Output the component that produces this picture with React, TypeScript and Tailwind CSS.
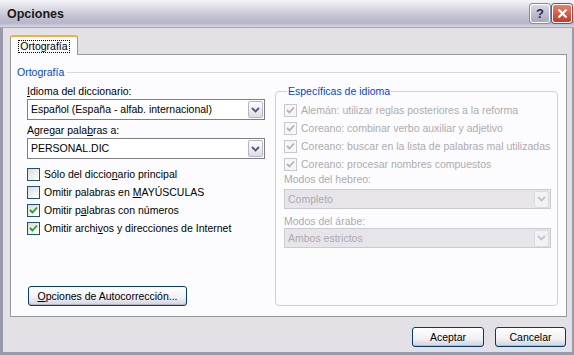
import React from "react";

const Check = ({ disabled }: { disabled?: boolean }) => (
  <svg width="9" height="9" viewBox="0 0 9 9">
    <path d="M1 4 L3.5 6.5 L8 1.5" fill="none" stroke={disabled ? "#b4b2b8" : "#21a121"} strokeWidth="1.8" />
  </svg>
);

const Box = ({ checked, disabled }: { checked?: boolean; disabled?: boolean }) => (
  <span
    className={
      "w-[13px] h-[13px] flex items-center justify-center shrink-0 border " +
      (disabled
        ? "border-[#c8c6ce] bg-[#f6f5f7]"
        : "border-[#1c5180] bg-[linear-gradient(135deg,#dcdcd7,#ffffff)]")
    }
  >
    {checked && <Check disabled={disabled} />}
  </span>
);

const CheckRow = ({
  checked,
  disabled,
  children,
}: {
  checked?: boolean;
  disabled?: boolean;
  children: React.ReactNode;
}) => (
  <div className={"h-[18px] flex items-center gap-[4px] " + (disabled ? "text-[#aeaab0]" : "")}>
    <Box checked={checked} disabled={disabled} />
    <span>{children}</span>
  </div>
);

const Chevron = ({ disabled }: { disabled?: boolean }) => (
  <span
    className={
      "w-[15px] h-[17px] shrink-0 flex items-center justify-center rounded-[2px] border " +
      (disabled
        ? "border-[#dcdae0] bg-[#f2f1f4]"
        : "border-[#b6b5c6] bg-[linear-gradient(to_bottom,#ffffff,#dcdce6)]")
    }
  >
    <svg width="9" height="6" viewBox="0 0 9 6">
      <path d="M1 1 L4.5 4.5 L8 1" fill="none" stroke={disabled ? "#c4c2ca" : "#4d5b78"} strokeWidth="1.8" />
    </svg>
  </span>
);

const Select = ({ value, disabled, h }: { value: string; disabled?: boolean; h: string }) => (
  <div
    className={
      "flex items-center border pl-[3px] pr-[1px] " +
      h +
      " " +
      (disabled ? "border-[#cbc9d1] bg-[#e7e5ea] text-[#aeaab0]" : "border-[#7f7f87] bg-white")
    }
  >
    <span className="flex-1 whitespace-nowrap">{value}</span>
    <Chevron disabled={disabled} />
  </div>
);

const Btn = ({ children, w }: { children: React.ReactNode; w: string }) => (
  <div
    className={
      "h-[20px] flex items-center justify-center rounded-[3px] border border-[#003c74] bg-[linear-gradient(to_bottom,#ffffff,#f0f0f4_60%,#d2d2de)] shadow-[inset_0_-1px_0_#b8b8cc] " +
      w
    }
  >
    {children}
  </div>
);

export default function App() {
  return (
    <div className="w-[574px] h-[355px] flex flex-col bg-[#e3e1e6] text-[10.5px] leading-[13px] text-black font-['Liberation_Sans',Arial,sans-serif] overflow-hidden">
      {/* Title bar */}
      <div className="h-[28px] shrink-0 flex items-center pl-[7px] pr-[2px] bg-[linear-gradient(to_bottom,#f4f4f8,#e4e4ec_20%,#c4c3d4_60%,#b6b5ca_85%,#d8d7e2)] border-b border-[#a8a7b8]">
        <span className="flex-1 font-bold text-[12.5px] text-[#1a1a1a] pt-[2px]">Opciones</span>
        <div className="flex gap-[2px]">
          <div className="w-[20px] h-[19px] rounded-[3px] border border-white bg-[linear-gradient(to_bottom,#d8d8e6,#a7a6bd)] flex items-center justify-center text-[#2a2a40] font-bold text-[13px] shadow-[0_0_0_1px_#8a89a0]">
            ?
          </div>
          <div className="w-[20px] h-[19px] rounded-[3px] border border-white bg-[linear-gradient(to_bottom,#e8806c,#c63a22)] flex items-center justify-center shadow-[0_0_0_1px_#9a4a40]">
            <svg width="11" height="11" viewBox="0 0 11 11">
              <path d="M1.5 1.5 L9.5 9.5 M9.5 1.5 L1.5 9.5" stroke="#ffffff" strokeWidth="2.2" />
            </svg>
          </div>
        </div>
      </div>

      {/* Body */}
      <div className="flex-1 flex flex-col border-l-[3px] border-r-[2px] border-b-[3px] border-[#9b9aac] pl-[7px] pr-[5px] pt-[7px]">
        {/* Tab */}
        <div className="flex">
          <div className="relative z-10 w-[68px] h-[20px] -mb-px bg-[#fcfcfe] border-l border-r border-[#919b9c] rounded-t-[3px] border-t-[2px] border-t-[#f6b040] flex items-center justify-center">
            <span className="border border-dotted border-black px-[1px] leading-[11px]">Ortografía</span>
          </div>
        </div>
        {/* Panel */}
        <div className="h-[263px] border border-[#919b9c] bg-[#fcfcfe] flex flex-col">
          <div className="mt-[11px] h-[13px] flex items-center pl-[6px] pr-[6px]">
            <span className="text-[#0046d5]">Ortografía</span>
            <div className="flex-1 h-px bg-[#d8d6de] ml-[3px]" />
          </div>
          <div className="mt-[6px] flex pl-[16px] gap-[10px]">
            {/* Left column */}
            <div className="w-[238px] flex flex-col">
              <div className="h-[13px]">
                <u>I</u>dioma del diccionario:
              </div>
              <div className="mt-[1px]">
                <Select h="h-[21px]" value="Español (España - alfab. internacional)" />
              </div>
              <div className="mt-[4px] h-[13px]">
                Agregar pala<u>b</u>ras a:
              </div>
              <div className="mt-[1px]">
                <Select h="h-[21px]" value="PERSONAL.DIC" />
              </div>
              <div className="mt-[6px] flex flex-col">
                <CheckRow>
                  Sólo del diccio<u>n</u>ario principal
                </CheckRow>
                <CheckRow>
                  Omitir palabras en <u>M</u>AYÚSCULAS
                </CheckRow>
                <CheckRow checked>
                  Omitir p<u>a</u>labras con números
                </CheckRow>
                <CheckRow checked>
                  Omitir archi<u>v</u>os y direcciones de Internet
                </CheckRow>
              </div>
              <div className="mt-[49px] pl-[1px]">
                <Btn w="w-[159px]">
                  <span>
                    <u>O</u>pciones de Autocorrección...
                  </span>
                </Btn>
              </div>
            </div>
            {/* Right group */}
            <fieldset className="w-[283px] h-[221px] border border-[#d0ced6] rounded-[4px] pl-[8px] pr-[6px] flex flex-col">
              <legend className="text-[#0046d5] ml-[3px] px-[1px]">Específicas de idioma</legend>
              <div className="mt-[3px] flex flex-col">
                <CheckRow checked disabled>
                  Alemán: utilizar reglas posteriores a la reforma
                </CheckRow>
                <CheckRow checked disabled>
                  Coreano: combinar verbo auxiliar y adjetivo
                </CheckRow>
                <CheckRow checked disabled>
                  Coreano: buscar en la lista de palabras mal utilizadas
                </CheckRow>
                <CheckRow checked disabled>
                  Coreano: procesar nombres compuestos
                </CheckRow>
              </div>
              <div className="h-[12px] leading-[12px] text-[#aeaab0]">Modos del hebreo:</div>
              <div className="mt-[4px]">
                <Select disabled h="h-[20px]" value="Completo" />
              </div>
              <div className="mt-[6px] h-[12px] leading-[12px] text-[#aeaab0]">Modos del árabe:</div>
              <div className="mt-[1px]">
                <Select disabled h="h-[20px]" value="Ambos estrictos" />
              </div>
            </fieldset>
          </div>
        </div>
        {/* Buttons */}
        <div className="mt-[10px] flex justify-end gap-[11px] pr-[1px]">
          <Btn w="w-[72px]">Aceptar</Btn>
          <Btn w="w-[71px]">Cancelar</Btn>
        </div>
      </div>
    </div>
  );
}
